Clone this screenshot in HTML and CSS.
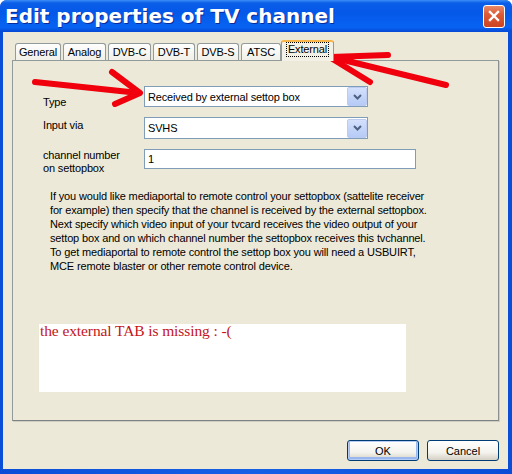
FILE: index.html
```html
<!DOCTYPE html>
<html lang="en">
<head>
    <meta charset="UTF-8">
    <title>Edit properties of TV channel</title>
    <link rel="stylesheet" href="styles.css">
</head>
<body>
    <div class="window">
        <div class="titlebar">
            <span class="title">Edit properties of TV channel</span>
            <button class="close-btn" aria-label="Close">
                <svg width="12" height="12" viewBox="0 0 12 12">
                    <path d="M2 2 L10 10 M10 2 L2 10" stroke="#fff" stroke-width="2.4" stroke-linecap="square"/>
                </svg>
            </button>
        </div>

        <div class="client">
            <div class="tabs">
                <div class="tab tab-general">General</div>
                <div class="tab tab-analog">Analog</div>
                <div class="tab tab-dvbc">DVB-C</div>
                <div class="tab tab-dvbt">DVB-T</div>
                <div class="tab tab-dvbs">DVB-S</div>
                <div class="tab tab-atsc">ATSC</div>
                <div class="tab tab-external active"><span class="focus">External</span></div>
            </div>

            <div class="panel">
                <div class="form">
                    <label class="lbl lbl-type">Type</label>
                    <div class="combo">
                        <span class="combo-text">Received by external settop box</span>
                        <span class="combo-btn">
                            <svg width="9" height="6" viewBox="0 0 9 6">
                                <path d="M1 1 L4.5 4.5 L8 1" fill="none" stroke="#4d6185" stroke-width="2"/>
                            </svg>
                        </span>
                    </div>

                    <label class="lbl lbl-input">Input via</label>
                    <div class="combo combo-input">
                        <span class="combo-text">SVHS</span>
                        <span class="combo-btn">
                            <svg width="9" height="6" viewBox="0 0 9 6">
                                <path d="M1 1 L4.5 4.5 L8 1" fill="none" stroke="#4d6185" stroke-width="2"/>
                            </svg>
                        </span>
                    </div>

                    <label class="lbl lbl-channel">channel number<br>on settopbox</label>
                    <div class="textbox">1</div>
                </div>

                <p class="help">
                    If you would like mediaportal to remote control your settopbox (sattelite receiver<br>
                    for example) then specify that the channel is received by the external settopbox.<br>
                    Next specify which video input of your tvcard receives the video output of your<br>
                    settop box and on which channel number the settopbox receives this tvchannel.<br>
                    To get mediaportal to remote control the settop box you will need a USBUIRT,<br>
                    MCE remote blaster or other remote control device.
                </p>

                <div class="note">the external TAB is missing : -(</div>
            </div>

            <div class="buttons">
                <button class="btn btn-default">OK</button>
                <button class="btn">Cancel</button>
            </div>
        </div>

        <!-- red arrows drawn over the screenshot -->
        <svg class="arrows" width="512" height="474" viewBox="0 0 512 474">
            <g fill="none" stroke="#f0000c" stroke-width="6" stroke-linecap="round" stroke-linejoin="round">
                <path d="M35 82 L139 93"/>
                <path d="M112 72 L140 93 L115 104"/>
                <path d="M388 55 L331 57 L446 85"/>
                <path d="M331 58 L370 82"/>
            </g>
        </svg>
    </div>
</body>
</html>
```

FILE: styles.css
```css
body {
    margin: 0;
    font-family: "Liberation Sans", Arial, sans-serif;
    font-size: 11px;
    letter-spacing: -0.15px;
    color: #000;
    background: #fff;
}
.window {
    position: relative;
    width: 512px;
    height: 474px;
    display: flex;
    flex-direction: column;
    background: linear-gradient(to right, #0a4ed8, #1660e6 50%, #0a4ed8);
    border-radius: 7px 7px 0 0;
    overflow: hidden;
}
.titlebar {
    height: 32px;
    flex: none;
    display: flex;
    align-items: center;
    padding: 0 7px 0 5px;
    background: linear-gradient(to bottom, #3c8ef6 0, #0a5ee8 3px, #0558e8 40%, #0863f2 85%, #0448d4 100%);
}
.title {
    flex: 1;
    color: #fff;
    font-family: "DejaVu Sans", Verdana, sans-serif;
    font-weight: bold;
    font-size: 20px;
    letter-spacing: 0;
    text-shadow: 1px 1px 0 #0a2a9a;
    white-space: nowrap;
}
.close-btn {
    width: 22px;
    height: 23px;
    padding: 0;
    display: flex;
    align-items: center;
    justify-content: center;
    border: 1px solid #fff;
    border-radius: 3px;
    background: linear-gradient(to bottom, #e88a6a 0, #dc5a35 40%, #cc4423 100%);
}
.client {
    flex: 1;
    margin: 0 4px 5px 3px;
    padding: 8px 9px 0 9px;
    background: #ece9d8;
    display: flex;
    flex-direction: column;
}

/* tab strip */
.tabs {
    display: flex;
    align-items: flex-end;
    gap: 2px;
    padding-left: 3px;
}
.tab {
    height: 17px;
    box-sizing: border-box;
    border: 1px solid #919b9c;
    border-bottom: none;
    border-radius: 3px 3px 0 0;
    background: linear-gradient(to bottom, #fefefe, #f0efe8);
    display: flex;
    align-items: center;
    justify-content: center;
    white-space: nowrap;
}
.tab-general { width: 46px; }
.tab-analog { width: 43px; }
.tab-dvbc { width: 43px; }
.tab-dvbt { width: 42px; }
.tab-dvbs { width: 42px; }
.tab-atsc { width: 40px; }
.tab.active {
    width: 53px;
    height: 21px;
    margin: 0 0 -1px -2px;
    position: relative;
    z-index: 1;
    background: #f3f1e6;
    border-top: 2px solid #f7b54a;
    align-items: flex-start;
    padding-top: 1px;
}
.focus {
    outline: 1px dotted #000;
    outline-offset: 0;
    padding: 0 1px;
    line-height: 13px;
}

/* tab page */
.panel {
    height: 361px;
    box-sizing: border-box;
    border: 1px solid #919b9c;
    border-right-color: #8a9091;
    border-bottom-color: #7e8485;
    box-shadow: 1px 1px 0 #d0cdc0;
    background: #ece9d8;
    padding: 25px 0 0 26px;
}
.form {
    display: grid;
    grid-template-columns: 101px auto;
    grid-template-rows: 21px 21px 20px;
    row-gap: 10px;
    margin-left: 4px;
    align-items: start;
}
.lbl {
    line-height: 13px;
}
.lbl-type { padding-top: 10px; }
.lbl-input { padding-top: 2px; }
.lbl-channel { padding-top: 1px; }
.combo {
    width: 224px;
    height: 21px;
    box-sizing: border-box;
    border: 1px solid #7f9db9;
    background: #fff;
    display: flex;
    align-items: center;
    justify-content: space-between;
}
.combo-input {
    height: 22px;
}
.combo-text {
    padding-left: 3px;
}
.combo-btn {
    width: 20px;
    height: 19px;
    box-sizing: border-box;
    border: 1px solid #bccbf1;
    border-radius: 2px;
    background: linear-gradient(to bottom, #d4e0fc, #b6caf6);
    display: flex;
    align-items: center;
    justify-content: center;
}
.textbox {
    width: 272px;
    height: 20px;
    margin-top: 1px;
    box-sizing: border-box;
    border: 1px solid #7f9db9;
    background: #fff;
    padding-left: 3px;
    line-height: 18px;
}
.help {
    margin: 21px 0 0 11px;
    line-height: 14px;
    white-space: nowrap;
}
.note {
    width: 366px;
    height: 68px;
    margin-top: 51px;
    background: #fff;
    color: #c41420;
    font-family: "Liberation Serif", "Times New Roman", serif;
    font-size: 15.5px;
    letter-spacing: -0.1px;
    line-height: 14px;
    padding-left: 1px;
}

/* dialog buttons */
.buttons {
    display: flex;
    justify-content: flex-end;
    gap: 8px;
    margin-top: 19px;
}
.btn {
    width: 72px;
    height: 21px;
    padding: 0;
    border: 1px solid #003c74;
    border-radius: 3px;
    background: linear-gradient(to bottom, #ffffff 0, #f4f3ee 60%, #d6d0c5 100%);
    font-family: "Liberation Sans", Arial, sans-serif;
    font-size: 11px;
    color: #000;
}
.btn-default {
    box-shadow: inset 0 0 0 1px #b6ccf4, inset 0 -1px 0 2px #9ab6ee;
}

.arrows {
    position: absolute;
    top: 0;
    left: 0;
    pointer-events: none;
}
```
